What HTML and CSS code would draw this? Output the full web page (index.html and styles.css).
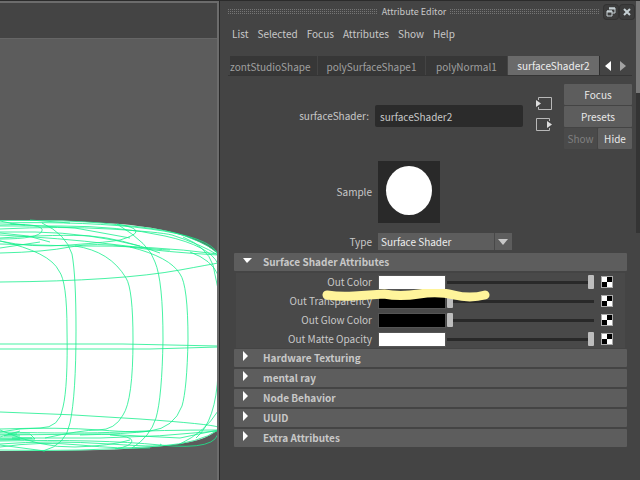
FILE: index.html
```html
<!DOCTYPE html>
<html lang="en">
<head>
<meta charset="utf-8">
<title>Attribute Editor</title>
<link rel="stylesheet" href="styles.css">
</head>
<body>
<div class="app">
  <main class="viewport">
    <div class="view-toolbar"></div>
    <svg class="mesh" viewBox="0 0 218 441" preserveAspectRatio="xMinYMin slice" aria-label="Wireframe mesh">
      <g transform="translate(0 -39)">
        <path class="body" d="M0 220L62 220.500L120 224Q165 228 190 238Q210 246 218 254V430Q206 439 190 442Q160 448 100 450L45 451H0Z"/>
        <g class="wire">
          <path d="M0 220.500H40Q90 221 120 225Q170 229 190 238Q210 245 218 254M0 223Q90 221 150 229T218 254M0 226H60Q120 226 165 236T218 264M0 229Q60 226 110 229T172 235Q200 244 218 255M0 232H35Q90 233 140 246M0 235Q60 238 110 244T170 250M0 238Q60 234 90 236T160 253M0 241Q30 248 70 245T120 240Q137 235 136 231T117 224M0 244L75 246Q150 245 218 254M0 253Q45 252 70 247T130 247T218 255M0 225Q45 223 42 231T0 239M0 221Q12 224 25 225M30 220L70 223M0 233L28 236L50 242M0 248L40 242M10 224L75 228L130 238"/>
          <path d="M0 282Q120 281 180 270T218 263M0 344H123L218 346M0 349H150Q185 348 218 347M0 412Q70 414 140 419T218 427"/>
          <path d="M0 241Q50 252 59 271Q67 281 67 330Q68 386 63 407Q60 428 40 428T0 432"/>
          <path d="M42 223Q66 234 72 254Q76 276 76 330Q76 395 70 423Q66 445 43 451"/>
          <path d="M75 246Q110 251 126 278Q133 289 133 340Q133 400 123 415Q115 430 98 430T45 438"/>
          <path d="M117 224Q150 244 155 262Q163 281 163 340Q162 397 156 418Q150 437 132 448"/>
          <path d="M130 247Q170 257 180 274Q188 285 188 340Q187 389 182 406Q174 428 150 431T80 435"/>
          <path d="M183 237Q207 247 213 265L218 289M190 252Q212 260 218 275M218 373Q216 421 196 438M218 411Q205 432 180 444"/>
          <path d="M0 429Q60 427 100 430T150 431M0 432Q80 434 120 432T218 430M0 435L100 434L180 438L218 430M0 438H100Q160 437 218 431M0 441Q100 439 160 445T218 430M0 444Q50 440 110 444T160 444M0 447Q40 441 80 445T150 448M0 450Q40 451 80 450T160 446T218 430M0 445L30 449L45 451M20 431L0 437M0 434L30 434L35 439L0 440M110 435Q132 436 132 441T115 449M0 430Q40 448 75 447T130 440"/>
          <path class="dense" d="M8 434H17M4 436H20M12 438H32M0 439H20"/>
        </g>
      </g>
    </svg>
  </main>
  <aside class="editor">
    <header class="titlebar">
      <span class="grip"></span><h1>Attribute Editor</h1><span class="grip"></span>
      <div class="wins">
        <button class="win" aria-label="Float"><svg width="14" height="14" viewBox="0 0 14 14"><path d="M5 3H11V8H8M3 6H8V11H3Z" fill="none" stroke="#c6d0d4" stroke-width="1"/><path d="M5 3.500H11M3 6.500H8" stroke="#c6d0d4" stroke-width="2"/></svg></button>
        <button class="win" aria-label="Close"><svg width="14" height="14" viewBox="0 0 14 14"><path d="M4 4L10 10M10 4L4 10" stroke="#c6d0d4" stroke-width="2"/></svg></button>
      </div>
    </header>
    <nav class="menu"><a href="#">List</a><a href="#">Selected</a><a href="#">Focus</a><a href="#">Attributes</a><a href="#">Show</a><a href="#">Help</a></nav>
    <div class="tabbar">
      <div class="tabs">
        <button class="tab cut"><span>zontStudioShape</span></button><button class="tab shape">polySurfaceShape1</button><button class="tab normal">polyNormal1</button><button class="tab active">surfaceShader2</button>
      </div>
      <div class="arrows">
        <button aria-label="Previous tab"><svg width="6" height="10" viewBox="0 0 6 10"><path d="M6 0V10L0 5Z" fill="#fff"/></svg></button>
        <button aria-label="Next tab"><svg width="6" height="10" viewBox="0 0 6 10"><path d="M0 0V10L6 5Z" fill="#a2a2a2"/></svg></button>
      </div>
    </div>
    <section class="node">
      <label class="name-label" for="node">surfaceShader:</label>
      <input class="name" id="node" type="text" value="surfaceShader2">
      <div class="links">
        <button aria-label="Input connection"><svg width="17" height="15" viewBox="0 0 17 15"><path d="M3.500 4V1.500H16.500V13.500H3.500V11" fill="none" stroke="#b8b8b8"/><path d="M1 4V11L6 7.500Z" fill="#ddd"/></svg></button>
        <button aria-label="Output connection"><svg width="17" height="15" viewBox="0 0 17 15"><path d="M14.500 4V1.500H1.500V13.500H14.500V11" fill="none" stroke="#b8b8b8"/><path d="M12 4V11L17 7.500Z" fill="#ddd"/></svg></button>
      </div>
      <div class="actions">
        <button class="wide">Focus</button><button class="wide">Presets</button><button disabled>Show</button><button>Hide</button>
      </div>
    </section>
    <section class="sample">
      <span class="label">Sample</span>
      <div class="swatch"><svg viewBox="0 0 62 62"><ellipse cx="31" cy="29.500" rx="23" ry="24.500" fill="#fff"/></svg></div>
      <label class="label" for="type">Type</label>
      <div class="select"><select id="type"><option>Surface Shader</option></select><span class="drop"></span></div>
    </section>
    <section class="groups">
      <button class="group open">Surface Shader Attributes</button>
      <div class="attrs">
        <label for="a1">Out Color</label><span class="color white"></span><input id="a1" type="range" value="100"><button class="map" aria-label="Map color"></button>
        <label for="a2">Out Transparency</label><span class="color"></span><input id="a2" type="range" value="0"><button class="map" aria-label="Map transparency"></button>
        <label for="a3">Out Glow Color</label><span class="color"></span><input id="a3" type="range" value="0"><button class="map" aria-label="Map glow color"></button>
        <label for="a4">Out Matte Opacity</label><span class="color white"></span><input id="a4" type="range" value="100"><button class="map" aria-label="Map matte opacity"></button>
        <svg class="marker" width="168" height="13" viewBox="0 0 168 13"><path d="M5 6Q18 8 32 7T62 5Q78 8 97 5T132 6T163 6" fill="none" stroke="#fff49b" stroke-width="9" stroke-linecap="round"/></svg>
      </div>
      <button class="group">Hardware Texturing</button>
      <button class="group">mental ray</button>
      <button class="group">Node Behavior</button>
      <button class="group">UUID</button>
      <button class="group">Extra Attributes</button>
    </section>
  </aside>
  <div class="edge"></div>
</div>
</body>
</html>
```
FILE: styles.css
```css
* { box-sizing: border-box; }
body { margin: 0; background: #444; color: #c8c8c8; font: 10px/16px "Noto Sans CJK SC", "Noto Sans", sans-serif; }
button, input, select { font: inherit; color: inherit; border: 0; margin: 0; padding: 0; background: none; }
svg { display: block; }
.app { display: grid; grid-template-columns: 220px 1fr 4px; min-height: 100vh; border-top: 1px solid #2b2b2b; }
.viewport { display: flex; flex-direction: column; background: #5c5c5c; border: 1px solid #6c6c6c; border-width: 2px 2px 0 0; box-shadow: 1px 0 #292929; margin-right: 1px; }
.view-toolbar { height: 36px; background: #444; border-bottom: 1px solid #666; }
.mesh { flex: 1; width: 100%; min-height: 0; }
.body { fill: #fff; }
.wire { fill: none; stroke: #19ef8d; stroke-width: 1; stroke-opacity: .8; }
.dense { stroke-opacity: 1; }
.editor { min-width: 0; padding: 2px 4px 0 8px; }
.titlebar { display: flex; align-items: center; height: 17px; margin-right: -2px; }
h1 { margin: 0 4px; font-size: 9px; line-height: 16px; font-weight: 400; }
.grip { flex: 1; height: 5px; background: linear-gradient(transparent 1px, #444 1px) 0 0 / 2px 2px, linear-gradient(90deg, #757575 1px, #444 1px) 0 0 / 2px 2px; }
.wins { display: flex; gap: 2px; margin-left: 4px; }
.win { width: 14px; height: 14px; border-radius: 3px; background: #3c3c3c; box-shadow: 0 0 0 1px #333; }
.menu { display: flex; gap: 9px; padding: 6px 4px 0; }
.menu a { color: inherit; text-decoration: none; }
.tabbar { display: flex; align-items: center; gap: 5px; margin-top: 14px; padding: 0 6px 0 2px; border-bottom: 1px solid #353535; }
.tabs { display: flex; flex: 1; min-width: 0; height: 19px; background: #373737; border-right: 1px solid #2d2d2d; }
.tab { color: #a0a0a0; border-right: 1px solid #444; padding: 3px 0 0; overflow: hidden; white-space: nowrap; line-height: 16px; flex: 108 0 0; }
.cut { flex-grow: 88; text-align: left; }
.normal { flex-grow: 82; }
.active { flex-grow: 92; background: #6a6a6a; color: #eee; border-right: 0; padding: 0; }
.arrows { display: flex; gap: 9px; }
.node { display: flex; justify-content: flex-end; align-items: flex-start; margin-top: 8px; }
.name-label { margin: 24px 6px 0 0; }
.name { flex: 0 1 148px; min-width: 0; height: 22px; margin-top: 21px; padding: 0 5px; background: #2b2b2b; border-radius: 2px; }
.links { display: grid; gap: 6px; margin: 12px 12px 0; }
.actions { display: grid; grid-template-columns: 33px 34px; gap: 1px; }
.actions button { height: 21px; background: #5d5d5d; color: #e8e8e8; border-radius: 1px; }
.actions .wide { grid-column: 1 / 3; }
.actions button:disabled { background: #4a4a4a; color: #808080; }
.sample { display: grid; grid-template-columns: 144px 1fr; column-gap: 6px; row-gap: 10px; align-items: center; margin-top: 12px; }
.label { text-align: right; }
.swatch { width: 62px; height: 62px; background: #292929; }
.select { position: relative; width: 134px; height: 17px; }
select { appearance: none; display: block; width: 100%; height: 17px; padding: 0 3px; background: #5d5d5d; color: #eee; }
.drop { position: absolute; top: 0; right: 0; width: 18px; height: 17px; border-left: 1px solid #484848; pointer-events: none; }
.drop::after { content: ""; display: block; width: 10px; height: 6px; margin: 6px 3px; background: #c8c8c8; clip-path: polygon(0 0, 100% 0, 50% 100%); }
.groups { margin: 3px 5px 0 6px; }
.group { display: flex; align-items: center; width: 100%; height: 18px; margin-bottom: 2px; padding-left: 9px; background: #5d5d5d; border-radius: 1px; font-weight: 700; }
.group::before { content: ""; width: 20px; height: 10px; margin-bottom: 4px; background: #fff; clip-path: polygon(0 0, 5px 5px, 0 10px); }
.group.open::before { clip-path: polygon(0 3px, 9px 3px, 4px 8px); }
.attrs { position: relative; display: grid; grid-template-columns: 142px 69px 147px 18px; grid-auto-rows: 18px; row-gap: 1px; align-items: center; background: #494949; margin: 0 2px 1px; }
.attrs label { text-align: right; padding-right: 6px; }
.color { width: 68px; height: 15px; background: #000; border: 1px solid #555; }
.color.white { background: #fff; }
input[type=range] { appearance: none; width: 100%; height: 14px; background: linear-gradient(#292929, #292929) 0 6px / 100% 3px no-repeat; }
input[type=range]::-webkit-slider-thumb { appearance: none; width: 6px; height: 14px; background: #bdbdbd; border-radius: 1px; }
.map { width: 12px; height: 12px; margin-left: 7px; border: 1px solid #aaa; background: conic-gradient(#000 25%, #fff 0 50%, #000 0 75%, #fff 0); }
.marker { position: absolute; left: 86px; top: 16px; }
.edge { background: linear-gradient(#777 92px, #343434 92px 232px, #444 232px); }
```
